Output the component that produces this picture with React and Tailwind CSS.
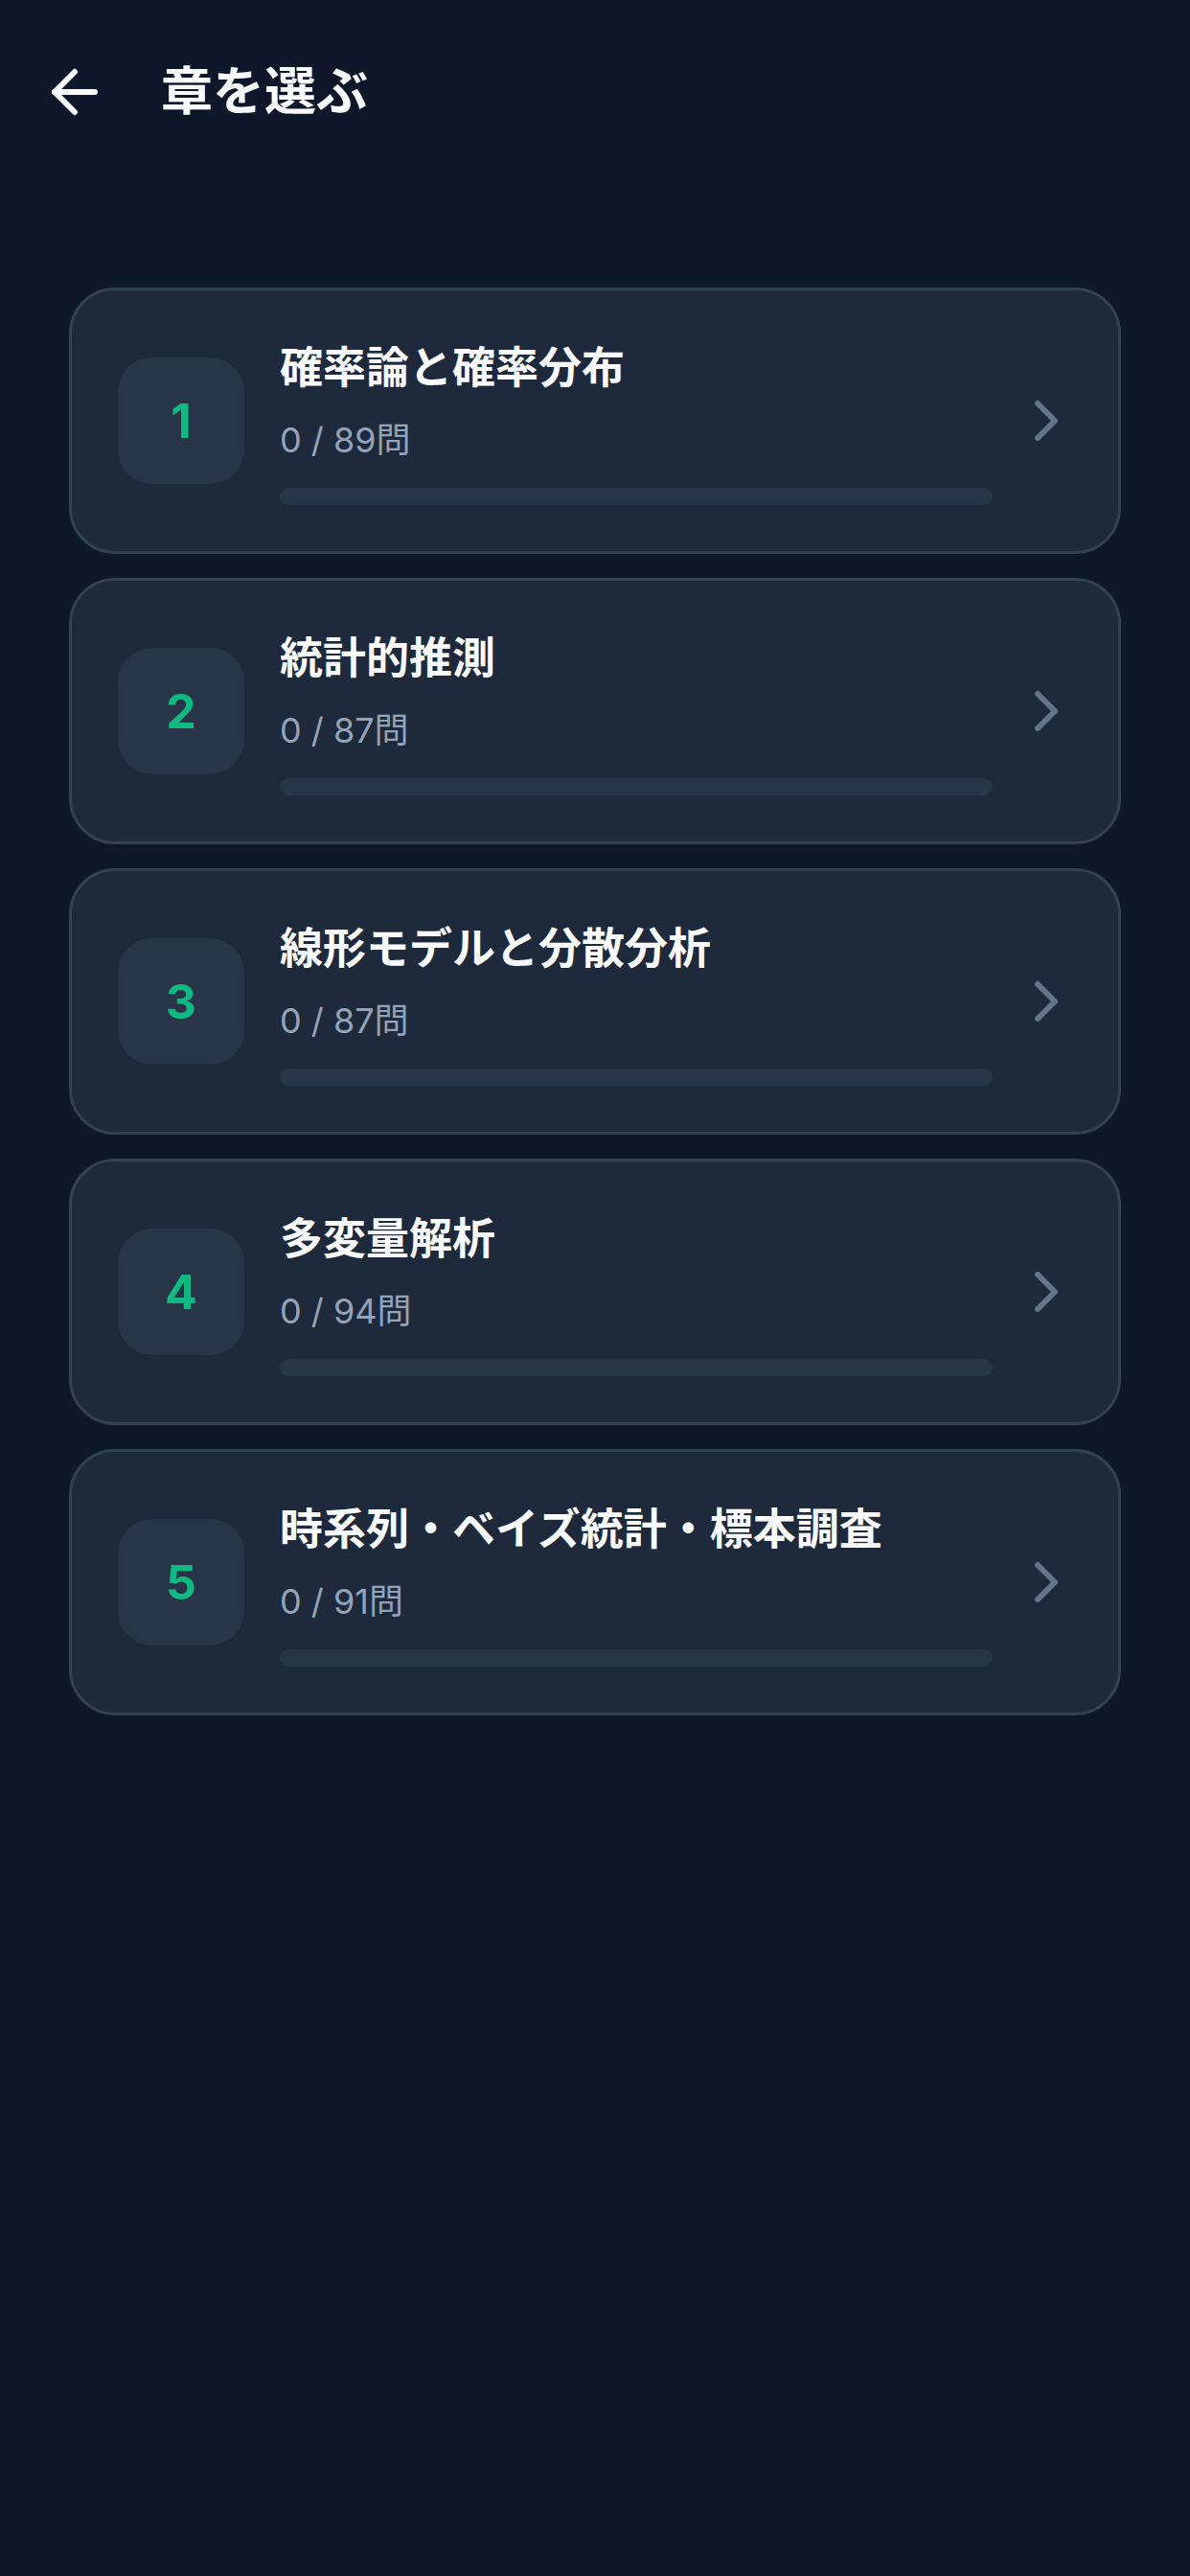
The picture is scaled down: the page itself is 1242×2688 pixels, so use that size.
import React from "react";
import { ArrowLeft, ChevronRight } from "lucide-react";

const chapters = [
  { n: 1, title: "確率論と確率分布", total: 89 },
  { n: 2, title: "統計的推測", total: 87 },
  { n: 3, title: "線形モデルと分散分析", total: 87 },
  { n: 4, title: "多変量解析", total: 94 },
  { n: 5, title: "時系列・ベイズ統計・標本調査", total: 91 },
];

const font = { fontFamily: 'Inter, "Noto Sans CJK JP", sans-serif' };

export default function App() {
  return (
    <div className="min-h-screen w-full bg-[#0f172a]" style={font}>
      <header className="flex h-[192px] items-center pl-[42px]">
        <ArrowLeft size={72} strokeWidth={2} className="text-slate-50" />
        <h1 className="ml-[54px] text-[54px] font-bold leading-none text-slate-50">
          章を選ぶ
        </h1>
      </header>
      <main className="flex flex-col gap-[25px] px-[72px] pt-[108px]">
        {chapters.map((c) => (
          <div
            key={c.n}
            className="flex items-center rounded-[48px] border-[3px] border-[#334155] bg-[#1e293b] py-[48px] pl-[48px] pr-[39px]"
          >
            <div className="flex h-[132px] w-[132px] shrink-0 items-center justify-center rounded-[36px] bg-[#283548]">
              <span className="text-[50px] font-bold leading-none text-[#10b981]">
                {c.n}
              </span>
            </div>
            <div className="ml-[37px] flex min-w-0 flex-1 flex-col">
              <div className="text-[45px] font-bold leading-[66px] text-slate-50">
                {c.title}
              </div>
              <div className="mt-[14px] text-[36px] leading-[57px] text-[#94a3b8]">
                0 / {c.total}問
              </div>
              <div className="mt-[21px] h-[18px] w-full rounded-full bg-[#283548]" />
            </div>
            <ChevronRight
              size={72}
              strokeWidth={2}
              className="ml-[20px] shrink-0 text-[#64748b]"
            />
          </div>
        ))}
      </main>
    </div>
  );
}
